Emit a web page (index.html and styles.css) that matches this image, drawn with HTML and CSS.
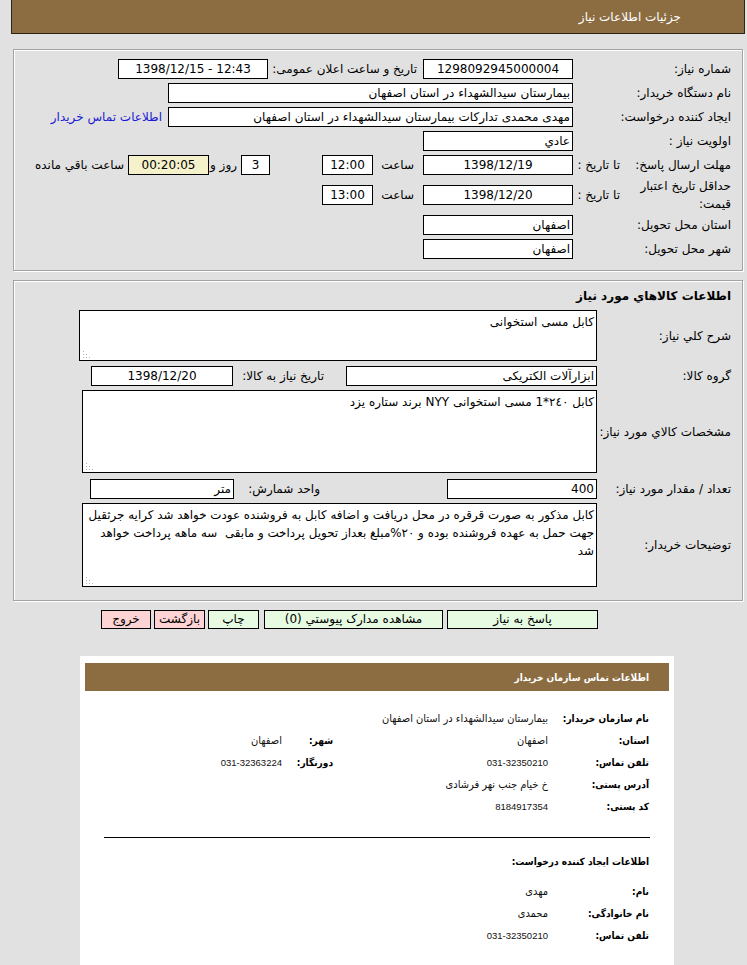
FILE: index.html
```html
<!DOCTYPE html>
<html lang="fa" dir="rtl">
<head>
<meta charset="utf-8">
<title>جزئیات اطلاعات نیاز</title>
<link rel="stylesheet" href="styles.css">
</head>
<body>
<div class="topbar"><span>جزئیات اطلاعات نیاز</span></div>

<div class="panel p1">
  <div class="row">
    <div class="lbl">شماره نیاز:</div>
    <div class="box w150 c">1298092945000004</div>
    <div class="lbl-pub">تاریخ و ساعت اعلان عمومی:</div>
    <div class="box w150 c" dir="ltr">1398/12/15 - 12:43</div>
  </div>
  <div class="row">
    <div class="lbl">نام دستگاه خریدار:</div>
    <div class="box w405">بیمارستان سیدالشهداء در استان اصفهان</div>
  </div>
  <div class="row">
    <div class="lbl">ایجاد کننده درخواست:</div>
    <div class="box w405">مهدی محمدی تدارکات بیمارستان سیدالشهداء در استان اصفهان</div>
    <a class="link" href="#">اطلاعات تماس خریدار</a>
  </div>
  <div class="row">
    <div class="lbl">اولویت نیاز :</div>
    <div class="box w150">عادي</div>
  </div>
  <div class="row">
    <div class="lbl-main">مهلت ارسال پاسخ:</div>
    <div class="lbl-sub">تا تاریخ :</div>
    <div class="box w150 c">1398/12/19</div>
    <div class="sa">ساعت</div>
    <div class="box w50 c">12:00</div>
    <div class="box w28 c days">3</div>
    <div class="rooz">روز و</div>
    <div class="box w80 c remain">00:20:05</div>
    <div class="left-txt">ساعت باقي مانده</div>
  </div>
  <div class="row tall">
    <div class="lbl-main two">حداقل تاریخ اعتبار<br>قیمت:</div>
    <div class="lbl-sub">تا تاریخ :</div>
    <div class="box w150 c">1398/12/20</div>
    <div class="sa">ساعت</div>
    <div class="box w50 c">13:00</div>
  </div>
  <div class="row">
    <div class="lbl">استان محل تحویل:</div>
    <div class="box w150">اصفهان</div>
  </div>
  <div class="row">
    <div class="lbl">شهر محل تحویل:</div>
    <div class="box w150">اصفهان</div>
  </div>
</div>

<div class="panel p2">
  <div class="title">اطلاعات کالاهاي مورد نیاز</div>
  <div class="row2 g5">
    <div class="lbl2">شرح کلي نیاز:</div>
    <div class="ta ta1">کابل مسی استخوانی<svg class="grip" width="8" height="8" viewBox="0 0 8 8"><g fill="#b4b4b4"><rect x="1" y="1" width="1" height="1"/><rect x="1" y="4" width="1" height="1"/><rect x="1" y="7" width="1" height="1"/><rect x="4" y="4" width="1" height="1"/><rect x="4" y="7" width="1" height="1"/><rect x="7" y="7" width="1" height="1"/></g></svg></div>
  </div>
  <div class="row2 g4">
    <div class="lbl2">گروه کالا:</div>
    <div class="box w250">ابزارآلات الکتریکی</div>
    <div class="lbl-need">تاریخ نیاز به کالا:</div>
    <div class="box w141 c">1398/12/20</div>
  </div>
  <div class="row2 g6">
    <div class="lbl2">مشخصات کالاي مورد نیاز:</div>
    <div class="ta ta2">کابل ۲٤٠*1 مسی استخوانی NYY برند ستاره یزد<svg class="grip" width="8" height="8" viewBox="0 0 8 8"><g fill="#b4b4b4"><rect x="1" y="1" width="1" height="1"/><rect x="1" y="4" width="1" height="1"/><rect x="1" y="7" width="1" height="1"/><rect x="4" y="4" width="1" height="1"/><rect x="4" y="7" width="1" height="1"/><rect x="7" y="7" width="1" height="1"/></g></svg></div>
  </div>
  <div class="row2 g4">
    <div class="lbl2">تعداد / مقدار مورد نیاز:</div>
    <div class="box w150">400</div>
    <div class="lbl-unit">واحد شمارش:</div>
    <div class="box w143">متر</div>
  </div>
  <div class="row2">
    <div class="lbl2">توضیحات خریدار:</div>
    <div class="ta ta3">کابل مذکور به صورت قرقره در محل دریافت و اضافه کابل به فروشنده عودت خواهد شد کرایه جرثقیل جهت حمل به عهده فروشنده بوده و ۲۰%مبلغ بعداز تحویل پرداخت و مابقی &nbsp;سه ماهه پرداخت خواهد شد<svg class="grip" width="8" height="8" viewBox="0 0 8 8"><g fill="#b4b4b4"><rect x="1" y="1" width="1" height="1"/><rect x="1" y="4" width="1" height="1"/><rect x="1" y="7" width="1" height="1"/><rect x="4" y="4" width="1" height="1"/><rect x="4" y="7" width="1" height="1"/><rect x="7" y="7" width="1" height="1"/></g></svg></div>
  </div>
</div>

<div class="buttons">
  <div class="btn green b151">پاسخ به نیاز</div>
  <div class="btn green b179 m4">مشاهده مدارک پیوستي (0)</div>
  <div class="btn green b51 m5">چاپ</div>
  <div class="btn pink b51 m3">بازگشت</div>
  <div class="btn pink b50 m3">خروج</div>
</div>

<div class="card">
  <div class="card-head">اطلاعات تماس سازمان خریدار</div>
  <div class="info">
    <div class="irow">
      <div class="ilbl">نام سازمان خریدار:</div>
      <div class="ival">بیمارستان سیدالشهداء در استان اصفهان</div>
    </div>
    <div class="irow">
      <div class="ilbl">استان:</div>
      <div class="ival wide">اصفهان</div>
      <div class="ilbl small">شهر:</div>
      <div class="ival">اصفهان</div>
    </div>
    <div class="irow">
      <div class="ilbl">تلفن تماس:</div>
      <div class="ival wide num">031-32350210</div>
      <div class="ilbl small">دورنگار:</div>
      <div class="ival num">031-32363224</div>
    </div>
    <div class="irow">
      <div class="ilbl">آدرس پستی:</div>
      <div class="ival">خ خیام جنب نهر فرشادی</div>
    </div>
    <div class="irow">
      <div class="ilbl">کد پستی:</div>
      <div class="ival num">8184917354</div>
    </div>
  </div>
  <hr class="sep">
  <div class="info2">
    <div class="subhead">اطلاعات ایجاد کننده درخواست:</div>
    <div class="irow">
      <div class="ilbl">نام:</div>
      <div class="ival">مهدی</div>
    </div>
    <div class="irow">
      <div class="ilbl">نام خانوادگی:</div>
      <div class="ival">محمدی</div>
    </div>
    <div class="irow">
      <div class="ilbl">تلفن تماس:</div>
      <div class="ival num">031-32350210</div>
    </div>
  </div>
</div>
</body>
</html>
```

FILE: styles.css
```css
* { box-sizing: border-box; }
html, body { margin: 0; padding: 0; }
body {
  background: #e1e1e1;
  font-family: "DejaVu Sans", Tahoma, sans-serif;
  font-size: 12px;
  color: #000;
  direction: rtl;
}

.topbar {
  height: 34px;
  margin-left: 11px;
  margin-right: 2px;
  background: #8c6d42;
  border: 1px solid #2d2416;
  border-top: none;
  display: flex;
  align-items: center;
  padding-right: 63px;
  color: #fff;
  font-size: 12px;
}

.panel {
  margin: 15px 4px 0 13px;
  border: 1px solid #a3a3a3;
  box-shadow: inset 1px 1px 0 #fff, 1px 1px 0 #fff;
  background: #e1e1e1;
}

.p1 { padding: 7px 11px 9px 0; }

.row {
  display: flex;
  align-items: center;
  height: 24px;
}
.row.tall { height: 36px; }

.lbl { width: 158px; flex: none; }
.lbl-main { width: 106px; flex: none; }
.lbl-main.two { line-height: 18px; }
.lbl-sub { width: 52px; flex: none; padding-right: 5px; }
.lbl-pub { width: 155px; flex: none; padding-right: 6px; white-space: nowrap; }

.box {
  flex: none;
  height: 20px;
  border: 1px solid #000;
  background: #fff;
  line-height: 18px;
  padding: 0 2px;
  white-space: nowrap;
  overflow: hidden;
}
.box.c { text-align: center; }
.w150 { width: 150px; }
.w405 { width: 405px; }
.w50 { width: 51px; }
.w28 { width: 29px; }
.w80 { width: 81px; }
.w250 { width: 251px; }
.w141 { width: 142px; }
.w143 { width: 144px; }

.remain { background: #f5f1cb; }
.days { margin-right: 52px; }

.link {
  color: #1a1ad6;
  text-decoration: none;
  margin-right: 6px;
  white-space: nowrap;
}

.sa { width: 50px; flex: none; padding-right: 9px; }
.rooz { width: 32px; flex: none; padding-right: 4px; white-space: nowrap; }
.left-txt { margin-right: 4px; white-space: nowrap; }

.p2 {
  margin-top: 9px;
  padding: 6px 11px 13px 0;
}
.title {
  font-weight: bold;
  height: 18px;
  line-height: 18px;
  margin-bottom: 5px;
}
.row2 {
  display: flex;
  align-items: center;
}
.g4 { margin-bottom: 4px; }
.g5 { margin-bottom: 5px; }
.g6 { margin-bottom: 6px; }
.lbl2 { width: 134px; flex: none; }
.lbl-need { width: 113px; flex: none; padding-right: 22px; }
.lbl-unit { width: 213px; flex: none; padding-right: 127px; }

.ta {
  flex: none;
  position: relative;
  background: #fff;
  border: 1px solid #000;
  padding: 2px 2px 0 3px;
  line-height: 18px;
  width: 515px;
}
.ta1 { width: 518px; height: 51px; }
.ta2 { height: 83px; }
.ta3 { height: 84px; font-size: 11.9px; }
.grip {
  position: absolute;
  left: 2px;
  bottom: 2px;
  display: block;
}

.buttons {
  display: flex;
  margin: 9px 149px 0 0;
}
.btn {
  flex: none;
  height: 19px;
  border: 1px solid #000;
  text-align: center;
  line-height: 17px;
  white-space: nowrap;
}
.green { background: #e7fbe2; }
.pink { background: #fdd3d3; }
.b151 { width: 151px; }
.b179 { width: 179px; }
.b51 { width: 51px; }
.b50 { width: 50px; }
.m3 { margin-right: 3px; }
.m4 { margin-right: 4px; }
.m5 { margin-right: 5px; }

.card {
  margin: 27px 73px 0 0;
  width: 594px;
  height: 320px;
  background: #fff;
  padding: 7px 5px 0;
}
.card-head {
  height: 28px;
  background: #8c6d42;
  color: #fff;
  font-weight: bold;
  font-family: "DejaVu Sans Condensed", "DejaVu Sans", sans-serif;
  font-size: 10px;
  display: flex;
  align-items: center;
  padding-right: 20px;
}
.info { padding: 16px 20px 0 0; }
.irow {
  display: flex;
  align-items: center;
  height: 22px;
}
.ilbl {
  width: 101px;
  flex: none;
  font-weight: bold;
  font-family: "DejaVu Sans Condensed", "DejaVu Sans", sans-serif;
  font-size: 10px;
  white-space: nowrap;
}
.ilbl.small { width: 51px; }
.ival {
  font-size: 11px;
  font-family: "DejaVu Sans Condensed", "DejaVu Sans", sans-serif;
  color: #111;
  white-space: nowrap;
}
.ival.num {
  font-family: "Liberation Sans", Arial, sans-serif;
  font-size: 9.5px;
}
.ival.wide { width: 215px; flex: none; }

.sep {
  margin: 20px 19px 0 19px;
  border: none;
  border-top: 1px solid #000;
  height: 0;
}
.info2 { padding: 13px 20px 0 0; }
.subhead {
  font-weight: bold;
  font-family: "DejaVu Sans Condensed", "DejaVu Sans", sans-serif;
  font-size: 10px;
  height: 22px;
  line-height: 22px;
  margin-bottom: 7px;
}
```
